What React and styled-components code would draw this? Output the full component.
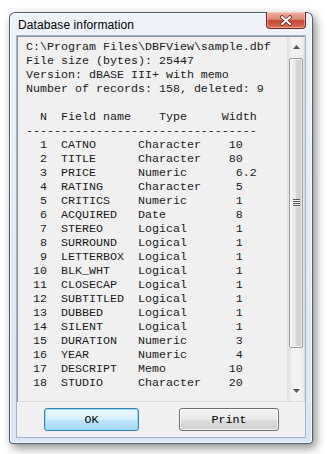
import React from "react";
import styled, { createGlobalStyle } from "styled-components";

const GlobalStyle = createGlobalStyle`
  html, body {
    margin: 0;
    padding: 0;
    background: #ffffff;
  }
`;

// white desktop behind the dialog
const Page = styled.div`
  padding: 12px 0 0 9px;
  width: 327px;
  height: 454px;
  box-sizing: border-box;
  overflow: hidden;
`;

const Window = styled.div`
  width: 304px;
  height: 432px;
  box-sizing: border-box;
  display: flex;
  flex-direction: column;
  border: 1px solid rgba(40, 60, 80, 0.8);
  border-radius: 6px 6px 4px 4px;
  background: linear-gradient(180deg, #eef3f9 0%, #e4ecf6 40%, #dae6f3 100%);
  box-shadow: 3px 4px 10px rgba(0, 0, 0, 0.45), inset 0 0 0 1px rgba(255, 255, 255, 0.7);
`;

const TitleBar = styled.div`
  height: 22px;
  flex: none;
  display: flex;
  align-items: center;
  justify-content: space-between;
  padding: 0 6px 0 8px;
`;

const Title = styled.span`
  font-family: "Liberation Sans", Arial, sans-serif;
  font-size: 12px;
  letter-spacing: 0.1px;
  color: #000;
  padding-top: 2px;
`;

const CloseButton = styled.div`
  align-self: flex-start;
  margin-top: -1px;
  width: 40px;
  height: 17px;
  box-sizing: border-box;
  border: 1px solid #6e2418;
  border-top: none;
  border-radius: 0 0 4px 4px;
  background: linear-gradient(180deg, #efb4a6 0%, #dc8670 45%, #c7432e 55%, #d3735a 100%);
  box-shadow: inset 0 0 0 1px rgba(255, 220, 210, 0.5);
  display: flex;
  align-items: center;
  justify-content: center;
`;

const Client = styled.div`
  flex: none;
  margin: 0 6px;
  height: 403px;
  box-sizing: border-box;
  border: 1px solid #9db4cc;
  background: #f0f0f0;
  display: flex;
  flex-direction: column;
`;

const ListBox = styled.div`
  height: 366px;
  box-sizing: border-box;
  border: 1px solid #8e8f8f;
  border-right-color: #dcdcdc;
  border-bottom-color: #dcdcdc;
  display: flex;
  background: #f0f0f0;
`;

const Listing = styled.pre`
  flex: 1;
  margin: 0;
  padding: 3px 0 0 8px;
  font-family: "Liberation Mono", "Courier New", monospace;
  font-size: 11.67px;
  line-height: 14px;
  color: #1a1a1a;
  overflow: hidden;
  white-space: pre;
`;

const ScrollBar = styled.div`
  width: 16px;
  flex: none;
  display: flex;
  flex-direction: column;
  background: linear-gradient(90deg, #e3e3e3 0%, #f3f3f3 30%, #f1f1f1 80%, #e6e6e6 100%);
  border-left: 1px solid #e2e2e2;
`;

const ArrowButton = styled.div`
  height: 20px;
  flex: none;
  display: flex;
  align-items: center;
  justify-content: center;
`;

const Track = styled.div`
  flex: 1;
  padding: 0 1px;
  display: flex;
  flex-direction: column;
`;

const Thumb = styled.div`
  height: 290px;
  margin-top: 1px;
  box-sizing: border-box;
  border: 1px solid #9a9a9a;
  border-radius: 2px;
  background: linear-gradient(90deg, #f4f4f4 0%, #e6e6e6 45%, #d6d6d6 55%, #cdcdcd 100%);
  box-shadow: inset 0 0 0 1px rgba(255, 255, 255, 0.7);
  display: flex;
  align-items: center;
  justify-content: center;
`;

const Gripper = styled.div`
  width: 7px;
  height: 8px;
  background: repeating-linear-gradient(180deg, #555555 0 1px, #f6f6f6 1px 2px);
`;

const ButtonRow = styled.div`
  display: flex;
  align-items: center;
  margin-top: 6px;
  padding-left: 27px;
  gap: 40px;
`;

const DialogButton = styled.div`
  width: ${(p) => p.$width}px;
  height: 23px;
  box-sizing: border-box;
  border-radius: 3px;
  display: flex;
  align-items: center;
  justify-content: center;
  font-family: "Liberation Mono", "Courier New", monospace;
  font-size: 11.67px;
  color: #000;
  border: 1px solid ${(p) => (p.$default ? "#3c7fb1" : "#707070")};
  background: ${(p) =>
    p.$default
      ? "linear-gradient(180deg, #eaf6fd 0%, #d9f0fc 48%, #bee6fd 52%, #a7d9f5 100%)"
      : "linear-gradient(180deg, #f2f2f2 0%, #ebebeb 48%, #dddddd 52%, #cfcfcf 100%)"};
  box-shadow: inset 0 0 0 1px ${(p) => (p.$default ? "rgba(140, 220, 250, 0.9)" : "rgba(255,255,255,0.8)")};
`;

const header = [
  "C:\\Program Files\\DBFView\\sample.dbf",
  "File size (bytes): 25447",
  "Version: dBASE III+ with memo",
  "Number of records: 158, deleted: 9",
  "",
  "  N  Field name    Type     Width",
  "---------------------------------",
];

const fields = [
  ["CATNO", "Character", "10"],
  ["TITLE", "Character", "80"],
  ["PRICE", "Numeric", "6", ".2"],
  ["RATING", "Character", "5"],
  ["CRITICS", "Numeric", "1"],
  ["ACQUIRED", "Date", "8"],
  ["STEREO", "Logical", "1"],
  ["SURROUND", "Logical", "1"],
  ["LETTERBOX", "Logical", "1"],
  ["BLK_WHT", "Logical", "1"],
  ["CLOSECAP", "Logical", "1"],
  ["SUBTITLED", "Logical", "1"],
  ["DUBBED", "Logical", "1"],
  ["SILENT", "Logical", "1"],
  ["DURATION", "Numeric", "3"],
  ["YEAR", "Numeric", "4"],
  ["DESCRIPT", "Memo", "10"],
  ["STUDIO", "Character", "20"],
];

const rows = fields.map(
  ([name, type, width, dec], i) =>
    String(i + 1).padStart(3) +
    "  " +
    name.padEnd(11) +
    type.padEnd(13) +
    width.padStart(2) +
    (dec || "")
);

const text = [...header, ...rows].join("\n");

function CloseIcon() {
  return (
    <svg width="14" height="11" viewBox="0 0 14 11">
      <path d="M3 2 L11 9 M11 2 L3 9" stroke="#5a2a22" strokeWidth="3.6" strokeLinecap="round" />
      <path d="M3 2 L11 9 M11 2 L3 9" stroke="#ffffff" strokeWidth="2" strokeLinecap="round" />
    </svg>
  );
}

function Arrow({ down }) {
  return (
    <svg width="7" height="4" viewBox="0 0 7 4">
      <path d={down ? "M0 0 L7 0 L3.5 4 Z" : "M0 4 L7 4 L3.5 0 Z"} fill="#555555" />
    </svg>
  );
}

export default function App() {
  return (
    <Page>
      <GlobalStyle />
      <Window>
        <TitleBar>
          <Title>Database information</Title>
          <CloseButton>
            <CloseIcon />
          </CloseButton>
        </TitleBar>
        <Client>
          <ListBox>
            <Listing>{text}</Listing>
            <ScrollBar>
              <ArrowButton>
                <Arrow />
              </ArrowButton>
              <Track>
                <Thumb>
                  <Gripper />
                </Thumb>
              </Track>
              <ArrowButton>
                <Arrow down />
              </ArrowButton>
            </ScrollBar>
          </ListBox>
          <ButtonRow>
            <DialogButton $default $width={95}>OK</DialogButton>
            <DialogButton $width={100}>Print</DialogButton>
          </ButtonRow>
        </Client>
      </Window>
    </Page>
  );
}
